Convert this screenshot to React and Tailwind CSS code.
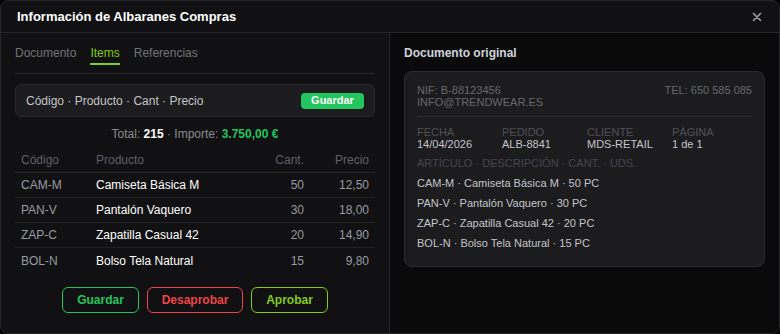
const rows = [
  { code: "CAM-M", name: "Camiseta Básica M", qty: 50, price: "12,50" },
  { code: "PAN-V", name: "Pantalón Vaquero", qty: 30, price: "18,00" },
  { code: "ZAP-C", name: "Zapatilla Casual 42", qty: 20, price: "14,90" },
  { code: "BOL-N", name: "Bolso Tela Natural", qty: 15, price: "9,80" },
];

const meta = [
  { label: "FECHA", value: "14/04/2026" },
  { label: "PEDIDO", value: "ALB-8841" },
  { label: "CLIENTE", value: "MDS-RETAIL" },
  { label: "PÁGINA", value: "1 de 1" },
];

const App = () => {
  return (
    <div className="w-[780px] h-[334px] bg-black font-['Liberation_Sans',Arial,sans-serif]">
      <div className="h-full flex flex-col rounded-lg border border-[#27272a] bg-[#111113] overflow-hidden">
        {/* header */}
        <div className="h-[32px] shrink-0 flex items-center justify-between pl-[16px] pr-[17px] border-b border-[#27272a]">
          <h2 className="text-[13px] font-bold text-white">Información de Albaranes Compras</h2>
          <svg width="10" height="10" viewBox="0 0 10 10">
            <path d="M1.5 1.5 L8.5 8.5 M8.5 1.5 L1.5 8.5" stroke="#a1a1aa" strokeWidth="1.6" strokeLinecap="round" />
          </svg>
        </div>

        <div className="flex flex-1 min-h-0">
          {/* left */}
          <div className="w-[389px] shrink-0 border-r border-[#27272a] px-[14px] pt-[12px]">
            <div className="flex gap-[14px] pb-[8px] border-b border-[#27272a] text-[12px] leading-[16px]">
              <span className="text-[#71717a] pb-[4px]">Documento</span>
              <span className="text-[#84cc16] pb-[2px] border-b-2 border-[#84cc16]">Items</span>
              <span className="text-[#71717a] pb-[4px]">Referencias</span>
            </div>

            <div className="mt-[10px] h-[33px] flex items-center justify-between px-[10px] rounded-md border border-[#2a2a2e] bg-[#1c1c1f]">
              <span className="text-[12px] text-[#c4c4c8]">Código · Producto · Cant · Precio</span>
              <span className="h-[16px] w-[63px] flex items-center justify-center rounded bg-[#22c55e] text-white text-[11px] font-bold">
                Guardar
              </span>
            </div>

            <p className="mt-[9px] text-center text-[12px] leading-[16px] text-[#8a8a90]">
              Total: <span className="font-bold text-white">215</span> · Importe:{" "}
              <span className="font-bold text-[#22c55e]">3.750,00 €</span>
            </p>

            <div className="mt-[6px] text-[12px]">
              <div className="grid grid-cols-[75px_1fr_60px_65px] h-[25px] items-center border-b border-[#27272a] text-[#5f6068]">
                <span className="px-[6px]">Código</span>
                <span className="px-[6px]">Producto</span>
                <span className="px-[6px] text-right">Cant.</span>
                <span className="px-[6px] text-right">Precio</span>
              </div>
              {rows.map((r, i) => (
                <div
                  key={r.code}
                  className={`grid grid-cols-[75px_1fr_60px_65px] h-[25px] items-center ${i < rows.length - 1 ? "border-b border-[#222225]" : ""}`}
                >
                  <span className="px-[6px] text-[#9a9aa2]">{r.code}</span>
                  <span className="px-[6px] text-white">{r.name}</span>
                  <span className="px-[6px] text-right text-[#9a9aa2]">{r.qty}</span>
                  <span className="px-[6px] text-right text-[#9a9aa2]">{r.price}</span>
                </div>
              ))}
            </div>

            <div className="mt-[14px] flex justify-center gap-[8px] text-[12px] font-bold">
              <button className="h-[26px] w-[77px] rounded-md border border-[#22c55e] text-[#22c55e]">Guardar</button>
              <button className="h-[26px] w-[96px] rounded-md border border-[#ef4444] text-[#ef4444]">Desaprobar</button>
              <button className="h-[26px] w-[77px] rounded-md border border-[#84cc16] text-[#84cc16]">Aprobar</button>
            </div>
          </div>

          {/* right */}
          <div className="flex-1 bg-[#0a0a0a] px-[14px] pt-[12px]">
            <h3 className="text-[12px] leading-[16px] font-bold text-[#d0d4dc]">Documento original</h3>
            <div className="mt-[10px] rounded-lg border border-[#2a2a2e] bg-[#1c1c1f] px-[12px] pt-[12px] pb-[13px] text-[11px]">
              <div className="flex justify-between leading-[12px] text-[#67676d] pb-[8px] border-b border-[#2e2e32]">
                <div>
                  <div>NIF: B-88123456</div>
                  <div>INFO@TRENDWEAR.ES</div>
                </div>
                <div>TEL: 650 585 085</div>
              </div>
              <div className="pt-[9px] grid grid-cols-[85px_85px_85px_1fr] leading-[12px]">
                {meta.map((m) => (
                  <div key={m.label}>
                    <div className="text-[#505056]">{m.label}</div>
                    <div className="text-[#c4c4c8]">{m.value}</div>
                  </div>
                ))}
              </div>
              <div className="mt-[7px] leading-[12px] text-[#46464c]">ARTÍCULO · DESCRIPCIÓN · CANT. · UDS.</div>
              <div className="mt-[4px] text-[#c4c4c8]">
                {rows.map((r) => (
                  <div key={r.code} className="leading-[20px]">
                    {r.code} · {r.name} · {r.qty} PC
                  </div>
                ))}
              </div>
            </div>
          </div>
        </div>
      </div>
    </div>
  );
};

export default App;
